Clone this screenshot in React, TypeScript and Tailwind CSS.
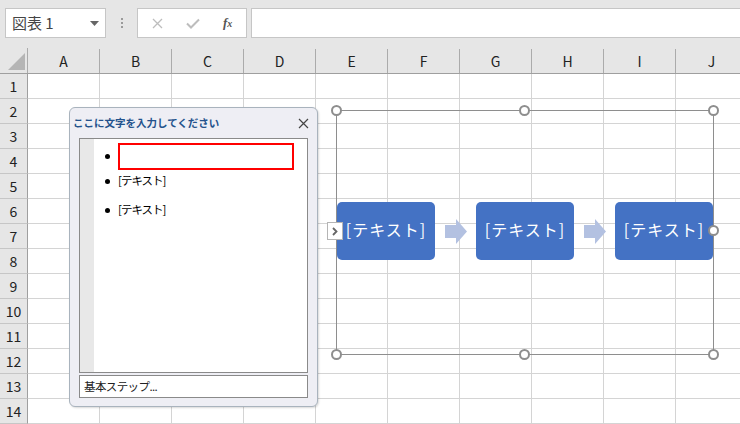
import React from 'react';

const COLS = ['A', 'B', 'C', 'D', 'E', 'F', 'G', 'H', 'I', 'J'];
const ROWS = Array.from({ length: 14 }, (_, i) => i + 1);

const JP = { fontFamily: '"Noto Sans CJK JP", "Noto Sans", sans-serif' };

function Handle({ className }: { className: string }) {
  return (
    <div
      className={`absolute h-[11px] w-[11px] rounded-full border-2 border-[#8e8e8e] bg-white ${className}`}
    />
  );
}

function Arrow({ className }: { className: string }) {
  return (
    <svg className={`absolute ${className}`} width="22" height="25" viewBox="0 0 22 25">
      <polygon points="0,6 11,6 11,0 22,12.5 11,25 11,19 0,19" fill="#b3c1e1" />
    </svg>
  );
}

function Toolbar() {
  return (
    <div className="flex h-[48px] items-start gap-0 bg-[#e6e6e6] pt-[8px]">
      <div className="ml-[5px] flex h-[30px] w-[101px] items-center justify-between border border-[#c6c6c6] bg-white pl-[6px] pr-[6px]">
        <span className="text-[15px] text-[#444]" style={JP}>
          図表 1
        </span>
        <svg width="9" height="5" viewBox="0 0 9 5">
          <polygon points="0,0 9,0 4.5,5" fill="#666" />
        </svg>
      </div>
      <div className="flex h-[30px] w-[31px] flex-col items-center justify-center gap-[2px]">
        <span className="h-[2px] w-[2px] bg-[#9a9a9a]" />
        <span className="h-[2px] w-[2px] bg-[#9a9a9a]" />
        <span className="h-[2px] w-[2px] bg-[#9a9a9a]" />
      </div>
      <div className="flex h-[30px] w-[110px] items-center border border-[#c6c6c6] bg-white">
        <svg className="ml-[14px]" width="11" height="11" viewBox="0 0 11 11">
          <path d="M1 1 L10 10 M10 1 L1 10" stroke="#bdbdbd" strokeWidth="1.3" />
        </svg>
        <svg className="ml-[23px]" width="14" height="11" viewBox="0 0 14 11">
          <path d="M1 5.5 L5 9.5 L13 1.5" stroke="#bdbdbd" strokeWidth="2" fill="none" />
        </svg>
        <span
          className="ml-[23px] text-[13px] italic font-bold text-[#555]"
          style={{ fontFamily: '"Liberation Serif", serif' }}
        >
          f<span className="text-[10px]">x</span>
        </span>
      </div>
      <div className="ml-[4px] h-[30px] flex-1 border border-r-0 border-[#c6c6c6] bg-white" />
    </div>
  );
}

function Grid() {
  return (
    <div className="flex flex-col">
      <div className="flex h-[26px] border-b border-[#9f9f9f] bg-[#e6e6e6]">
        <div className="relative w-[28px] shrink-0 border-r border-[#ababab]">
          <svg className="absolute left-[8px] top-[5px]" width="17" height="17" viewBox="0 0 17 17">
            <polygon points="17,0 17,17 0,17" fill="#b5b5b5" />
          </svg>
        </div>
        {COLS.map((c) => (
          <div
            key={c}
            className="mt-[1px] flex w-[72px] shrink-0 items-center justify-center border-r border-[#ababab] text-[14px] text-[#222]"
            style={JP}
          >
            {c}
          </div>
        ))}
      </div>
      {ROWS.map((r) => (
        <div key={r} className="flex h-[25px]">
          <div
            className="flex w-[28px] shrink-0 items-center justify-center border-b border-r border-b-[#c6c6c6] border-r-[#9f9f9f] bg-[#e6e6e6] text-[14px] text-[#222]"
            style={JP}
          >
            {r}
          </div>
          {COLS.map((c) => (
            <div key={c} className="w-[72px] shrink-0 border-b border-r border-[#d4d4d4] bg-white" />
          ))}
        </div>
      ))}
    </div>
  );
}

function TextPane() {
  return (
    <div
      className="absolute left-[69px] top-[107px] h-[300px] w-[249px] rounded-[6px] border border-[#a9b3bd] bg-[#eeeef4] shadow-[1px_1px_2px_rgba(0,0,0,0.15)]"
      style={JP}
    >
      <div className="flex h-[30px] items-center justify-between pl-[3px] pr-[8px]">
        <span className="text-[10.5px] font-bold text-[#23528c]">ここに文字を入力してください</span>
        <svg width="11" height="11" viewBox="0 0 11 11">
          <path d="M1 1 L10 10 M10 1 L1 10" stroke="#444" strokeWidth="1.2" />
        </svg>
      </div>
      <div className="mx-[9px] flex h-[235px] border border-[#8a8a8a] bg-white">
        <div className="w-[14px] bg-[#e8e8e8]" />
        <div className="flex flex-1 flex-col pl-[11px] pt-[4px]">
          <div className="flex h-[27px] items-center gap-[8px]">
            <span className="h-[5px] w-[5px] rounded-full bg-black" />
            <div className="h-[27px] w-[176px] border-2 border-[#ff0000]" />
          </div>
          <div className="flex h-[22px] items-center gap-[8px]">
            <span className="h-[5px] w-[5px] rounded-full bg-black" />
            <span className="text-[11.5px] tracking-[-1px] text-black">[テキスト]</span>
          </div>
          <div className="flex h-[36px] items-center gap-[8px]">
            <span className="h-[5px] w-[5px] rounded-full bg-black" />
            <span className="text-[11.5px] tracking-[-1px] text-black">[テキスト]</span>
          </div>
        </div>
      </div>
      <div className="mx-[9px] mt-[2px] flex h-[23px] items-center border border-[#8a8a8a] bg-white pl-[4px]">
        <span className="text-[11.5px] tracking-[-0.6px] text-[#222]">基本ステップ...</span>
      </div>
    </div>
  );
}

function SmartArt() {
  return (
    <>
      <div className="absolute left-[336px] top-[110px] h-[245px] w-[378px] border border-[#8e8e8e]" />
      {[337, 476, 615].map((x) => (
        <div
          key={x}
          className="absolute top-[202px] flex h-[58px] w-[98px] items-center justify-center rounded-[5px] bg-[#4472c4] pb-[4px] text-[16px] tracking-[1px] text-white"
          style={{ left: x, ...JP }}
        >
          [テキスト]
        </div>
      ))}
      <Arrow className="left-[445px] top-[219px]" />
      <Arrow className="left-[584px] top-[219px]" />
      <Handle className="left-[331px] top-[105px]" />
      <Handle className="left-[519px] top-[105px]" />
      <Handle className="left-[708px] top-[105px]" />
      <Handle className="left-[331px] top-[349px]" />
      <Handle className="left-[519px] top-[349px]" />
      <Handle className="left-[708px] top-[349px]" />
      <Handle className="left-[708px] top-[225px]" />
      <div className="absolute left-[327px] top-[222px] flex h-[18px] w-[16px] items-center justify-center border border-[#b5b5b5] bg-white">
        <svg width="6" height="9" viewBox="0 0 6 9">
          <path d="M1 1 L4.5 4.5 L1 8" stroke="#666" strokeWidth="1.8" fill="none" />
        </svg>
      </div>
    </>
  );
}

export default function App() {
  return (
    <div className="relative h-[424px] w-[740px] overflow-hidden bg-white">
      <Toolbar />
      <Grid />
      <TextPane />
      <SmartArt />
    </div>
  );
}
